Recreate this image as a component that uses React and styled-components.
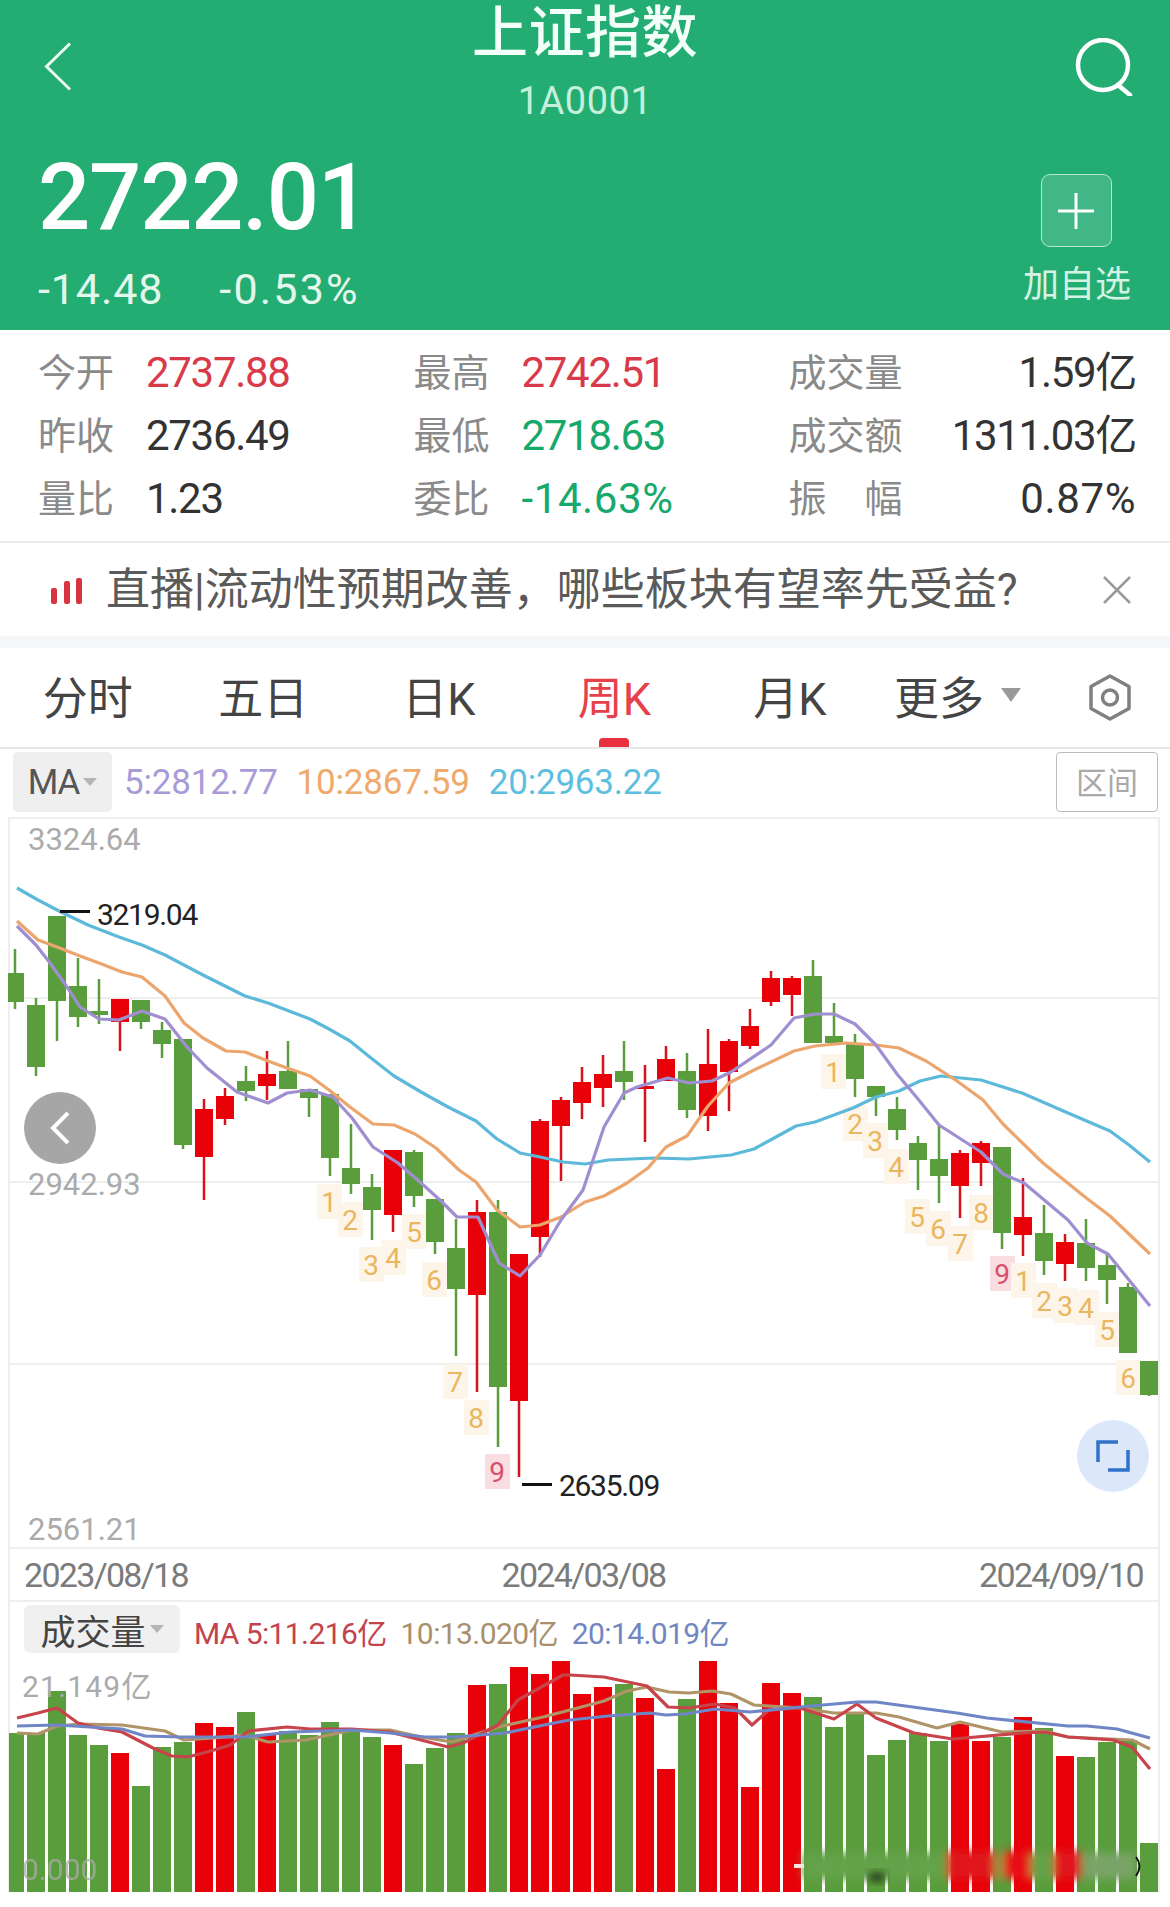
import React from "react";
import styled, { createGlobalStyle } from "styled-components";

const GREEN = "#599d3c";
const RED = "#e80109";
const COLUMN = (i) => 15 + i * 21;

// [high, bodyTop, bodyBottom, low, colour] in page pixels
const candles = [
  [949, 973, 1002, 1009, "g"], [998, 1005, 1067, 1076, "g"], [916, 916, 1001, 1041, "g"],
  [958, 986, 1017, 1027, "g"], [979, 1011, 1015, 1024, "g"], [999, 999, 1022, 1051, "r"],
  [1000, 1000, 1022, 1029, "g"], [1022, 1030, 1044, 1058, "g"], [1039, 1039, 1145, 1149, "g"],
  [1099, 1109, 1157, 1200, "r"], [1088, 1096, 1119, 1125, "r"], [1066, 1081, 1091, 1101, "g"],
  [1051, 1074, 1086, 1100, "r"], [1041, 1071, 1089, 1089, "g"], [1089, 1089, 1098, 1117, "g"],
  [1094, 1094, 1158, 1176, "g"], [1124, 1168, 1184, 1194, "g"], [1174, 1187, 1210, 1240, "g"],
  [1150, 1150, 1215, 1232, "r"], [1150, 1152, 1196, 1207, "g"], [1199, 1199, 1242, 1254, "g"],
  [1219, 1248, 1289, 1356, "g"], [1200, 1212, 1295, 1392, "r"], [1200, 1212, 1387, 1447, "g"],
  [1254, 1254, 1401, 1477, "r"], [1119, 1121, 1237, 1257, "r"], [1097, 1100, 1126, 1181, "r"],
  [1067, 1082, 1103, 1119, "r"], [1055, 1074, 1088, 1107, "r"], [1041, 1071, 1082, 1100, "g"],
  [1065, 1086, 1089, 1142, "r"], [1046, 1059, 1081, 1081, "r"], [1053, 1071, 1110, 1118, "g"],
  [1029, 1064, 1116, 1131, "r"], [1039, 1041, 1072, 1111, "r"], [1009, 1026, 1046, 1049, "r"],
  [971, 978, 1002, 1006, "r"], [976, 978, 995, 1016, "r"], [960, 976, 1043, 1043, "g"],
  [1003, 1036, 1043, 1043, "g"], [1034, 1044, 1079, 1097, "g"], [1086, 1086, 1097, 1116, "g"],
  [1097, 1109, 1130, 1140, "g"], [1136, 1143, 1160, 1190, "g"], [1125, 1159, 1176, 1203, "g"],
  [1150, 1153, 1186, 1218, "r"], [1141, 1143, 1163, 1186, "r"], [1147, 1147, 1233, 1249, "g"],
  [1178, 1217, 1235, 1256, "r"], [1205, 1233, 1261, 1275, "g"], [1234, 1242, 1264, 1281, "r"],
  [1219, 1243, 1268, 1281, "g"], [1254, 1265, 1280, 1304, "g"], [1283, 1287, 1353, 1353, "g"],
  [1361, 1361, 1395, 1396, "g"],
];

const ma5 = "17,926 36,945 50,963 67,987 80,1007 99,1019 119,1020 142,1011 165,1019 187,1047 207,1068 237,1092 268,1103 287,1093 310,1090 333,1097 352,1118 373,1147 398,1163 421,1183 440,1200 457,1217 478,1217 499,1263 520,1276 540,1255 561,1220 583,1190 604,1127 624,1093 637,1087 668,1078 689,1083 712,1081 731,1072 771,1045 794,1018 815,1014 834,1014 855,1024 876,1045 897,1074 918,1099 939,1125 981,1152 1003,1174 1024,1183 1068,1220 1087,1243 1108,1254 1150,1306";
const ma10 = "17,921 38,940 57,947 80,956 99,963 122,972 142,977 165,996 184,1023 203,1038 226,1051 245,1052 268,1061 287,1068 310,1076 329,1090 350,1107 373,1124 394,1125 415,1134 436,1148 459,1170 476,1182 497,1210 520,1227 540,1225 561,1217 585,1202 604,1196 627,1183 648,1168 666,1147 687,1136 708,1106 729,1083 754,1070 794,1051 815,1046 846,1043 876,1045 899,1048 926,1061 957,1081 983,1100 1003,1124 1043,1163 1085,1197 1110,1216 1150,1254";
const ma20 = "17,888 38,900 61,912 88,925 119,937 142,945 165,955 203,975 245,996 268,1003 310,1019 329,1029 350,1041 371,1058 394,1076 421,1092 448,1107 476,1121 497,1139 520,1153 540,1157 563,1162 585,1164 608,1160 654,1158 689,1159 731,1155 754,1149 796,1126 815,1122 853,1108 876,1097 899,1091 920,1081 941,1076 981,1080 1022,1093 1068,1113 1110,1131 1129,1145 1150,1162";

// TD sequence numbers: [x, y, digit]
const tdMarks = [
  [329, 1202, 1], [350, 1220, 2], [371, 1265, 3], [393, 1258, 4], [414, 1232, 5], [434, 1280, 6],
  [455, 1382, 7], [476, 1418, 8], [497, 1472, 9], [833, 1072, 1], [855, 1124, 2], [875, 1141, 3],
  [896, 1167, 4], [917, 1217, 5], [938, 1229, 6], [960, 1244, 7], [981, 1213, 8], [1002, 1274, 9],
  [1023, 1281, 1], [1044, 1301, 2], [1065, 1306, 3], [1086, 1308, 4], [1107, 1330, 5], [1128, 1378, 6],
];

const volumes = [
  [1733, "g"], [1733, "g"], [1691, "g"], [1735, "g"], [1745, "g"], [1753, "r"], [1786, "g"], [1747, "g"],
  [1742, "g"], [1723, "r"], [1727, "r"], [1712, "g"], [1735, "r"], [1731, "g"], [1735, "g"], [1722, "g"],
  [1730, "g"], [1737, "g"], [1745, "r"], [1764, "g"], [1748, "g"], [1733, "g"], [1685, "r"], [1684, "g"],
  [1667, "r"], [1674, "r"], [1661, "r"], [1694, "r"], [1687, "r"], [1684, "g"], [1698, "r"], [1769, "r"],
  [1699, "g"], [1661, "r"], [1703, "r"], [1787, "r"], [1683, "r"], [1693, "r"], [1697, "g"], [1727, "g"],
  [1712, "g"], [1755, "g"], [1740, "g"], [1733, "g"], [1741, "g"], [1724, "r"], [1741, "r"], [1737, "g"],
  [1717, "r"], [1728, "g"], [1756, "r"], [1757, "g"], [1742, "g"], [1740, "g"], [1843, "g"],
];

const volMa5 = "17,1718 38,1713 57,1708 78,1723 98,1728 122,1732 153,1748 172,1756 188,1757 214,1750 230,1745 249,1731 287,1727 310,1729 352,1729 390,1732 421,1740 448,1747 463,1743 498,1725 518,1700 563,1675 570,1675 604,1677 647,1686 668,1707 689,1708 715,1704 735,1708 752,1725 769,1710 800,1708 834,1719 857,1704 876,1718 914,1733 953,1739 1022,1733 1045,1732 1068,1737 1113,1740 1132,1747 1150,1769";
const volMa10 = "17,1733 38,1734 57,1726 80,1724 122,1725 165,1731 184,1740 214,1738 245,1735 268,1742 306,1740 352,1730 390,1730 421,1737 452,1742 498,1727 543,1717 570,1710 604,1701 627,1691 647,1687 669,1692 689,1693 712,1691 731,1694 754,1705 800,1708 834,1713 876,1713 899,1717 937,1728 960,1722 1002,1732 1045,1731 1068,1737 1132,1740 1150,1749";
const volMa20 = "17,1726 57,1725 122,1729 145,1736 180,1737 245,1737 291,1732 352,1730 390,1733 425,1737 455,1737 505,1733 559,1722 570,1720 608,1716 650,1713 666,1715 685,1714 715,1709 750,1712 800,1707 857,1702 876,1702 957,1713 987,1718 1068,1726 1087,1726 1117,1729 1150,1738";

const stats = [
  ["今开", "2737.88", "#d93a4a", "最高", "2742.51", "#d93a4a", "成交量", "1.59亿"],
  ["昨收", "2736.49", "#333", "最低", "2718.63", "#17a86b", "成交额", "1311.03亿"],
  ["量比", "1.23", "#333", "委比", "-14.63%", "#17a86b", "振　幅", "0.87%"],
];

const tabs = ["分时", "五日", "日K", "周K", "月K"];

export default function App() {
  return (
    <Page>
      <GlobalStyle />
      <Header>
        <TopBar>
          <BackIcon width="28" height="49" viewBox="0 0 28 49">
            <path d="M26 1.5 L2.5 24.5 L26 47.5" />
          </BackIcon>
          <TitleBlock>
            <Title>上证指数</Title>
            <Code>1A0001</Code>
          </TitleBlock>
          <SearchIcon width="58" height="58" viewBox="0 0 58 58">
            <circle cx="28" cy="27" r="25" />
            <path d="M43 47 L55 57" />
          </SearchIcon>
        </TopBar>
        <QuoteRow>
          <div>
            <Price>2722.01</Price>
            <ChangeRow>
              <span>-14.48</span>
              <ChangePercent>-0.53%</ChangePercent>
            </ChangeRow>
          </div>
          <AddBlock>
            <AddButton>
              <svg width="36" height="36" viewBox="0 0 36 36">
                <path d="M18 0 V36 M0 18 H36" stroke="#fff" strokeWidth="3" />
              </svg>
            </AddButton>
            <AddLabel>加自选</AddLabel>
          </AddBlock>
        </QuoteRow>
      </Header>

      <StatGrid>
        {stats.map((row) => (
          <React.Fragment key={row[0]}>
            <StatCell>
              <StatLabel>{row[0]}</StatLabel>
              <StatValue $color={row[2]}>{row[1]}</StatValue>
            </StatCell>
            <StatCell>
              <StatLabel>{row[3]}</StatLabel>
              <StatValue $color={row[5]} $percent={row[4].endsWith("%")}>
                {row[4]}
              </StatValue>
            </StatCell>
            <StatCell $spread>
              <StatLabel>{row[6]}</StatLabel>
              <StatValue $percent={row[7].endsWith("%")}>{row[7]}</StatValue>
            </StatCell>
          </React.Fragment>
        ))}
      </StatGrid>

      <Notice>
        <NoticeBars>
          <NoticeBar $h={16} />
          <NoticeBar $h={23} />
          <NoticeBar $h={26} />
        </NoticeBars>
        <NoticeText>直播|流动性预期改善，哪些板块有望率先受益?</NoticeText>
        <svg width="28" height="28" viewBox="0 0 28 28">
          <path d="M1 1 L27 27 M27 1 L1 27" stroke="#9a9a9a" strokeWidth="2.5" />
        </svg>
      </Notice>
      <Gap />

      <TabBar>
        {tabs.map((t) => (
          <Tab key={t} $active={t === "周K"}>
            {t}
          </Tab>
        ))}
        <Tab>
          更多
          <TabCaret />
        </Tab>
        <GearIcon width="44" height="47" viewBox="0 0 44 47">
          <path d="M22 2 L41 12.5 V34.5 L22 45 L3 34.5 V12.5 Z" />
          <circle cx="22" cy="23.5" r="7.5" />
        </GearIcon>
      </TabBar>

      <LegendRow>
        <MaButton>
          MA
          <SmallCaret />
        </MaButton>
        <Legend $color="#a99bd8">5:2812.77</Legend>
        <Legend $color="#efa96a">10:2867.59</Legend>
        <Legend $color="#5dbfe0">20:2963.22</Legend>
        <RangeButton>区间</RangeButton>
      </LegendRow>

      <ChartArea>
        <ChartSvg width="1152" height="732" viewBox="8 817 1152 732">
          <GridLine x1="8" x2="1160" y1="818" y2="818" />
          <GridLine x1="8" x2="1160" y1="998" y2="998" />
          <GridLine x1="8" x2="1160" y1="1182" y2="1182" />
          <GridLine x1="8" x2="1160" y1="1364" y2="1364" />
          <GridLine x1="8" x2="1160" y1="1548" y2="1548" />

          {tdMarks.map(([x, y, n]) => (
            <g key={`${x}-${n}`}>
              <rect
                x={x - 12}
                y={y - 18}
                width="25"
                height="35"
                fill={n === 9 ? "#f9dde0" : "#fef5ea"}
              />
              <TdDigit x={x} y={y + 10} $hot={n === 9}>
                {n}
              </TdDigit>
            </g>
          ))}

          {candles.map(([hi, top, bot, lo, c], i) => (
            <g key={i}>
              <rect
                x={COLUMN(i) - 1.25}
                y={hi}
                width="2.5"
                height={lo - hi}
                fill={c === "g" ? GREEN : "#d5131c"}
              />
              <rect
                x={COLUMN(i) - 9}
                y={top}
                width="18"
                height={bot - top}
                fill={c === "g" ? GREEN : RED}
              />
            </g>
          ))}

          <MaLine points={ma20} stroke="#5cb9da" />
          <MaLine points={ma10} stroke="#eba56d" />
          <MaLine points={ma5} stroke="#a08fd0" />

          <AxisLabel x="28" y="850">3324.64</AxisLabel>
          <AxisLabel x="28" y="1195">2942.93</AxisLabel>
          <AxisLabel x="28" y="1540">2561.21</AxisLabel>

          <rect x="60" y="910" width="30" height="3" fill="#111" />
          <PeakLabel x="97" y="925">3219.04</PeakLabel>
          <rect x="522" y="1483" width="30" height="3" fill="#111" />
          <PeakLabel x="559" y="1496">2635.09</PeakLabel>
        </ChartSvg>

        <BackFab>
          <svg width="20" height="34" viewBox="0 0 20 34">
            <path d="M18 2 L3 17 L18 32" fill="none" stroke="#fff" strokeWidth="4" />
          </svg>
        </BackFab>
        <ExpandFab>
          <svg width="34" height="32" viewBox="0 0 34 32">
            <path
              d="M2 22 V2 H22 M32 10 V30 H12"
              fill="none"
              stroke="#2f72c9"
              strokeWidth="3.5"
            />
          </svg>
        </ExpandFab>

        <DateRow>
          <span>2023/08/18</span>
          <span>2024/03/08</span>
          <span>2024/09/10</span>
        </DateRow>

        <VolumeHeader>
          <VolumeButton>
            成交量
            <SmallCaret />
          </VolumeButton>
          <VolumeLegend $color="#c2434c">MA 5:11.216亿</VolumeLegend>
          <VolumeLegend $color="#a98f6b">10:13.020亿</VolumeLegend>
          <VolumeLegend $color="#6f86c1">20:14.019亿</VolumeLegend>
        </VolumeHeader>

        <ChartSvg width="1152" height="232" viewBox="8 1660 1152 232">
          <defs>
            <filter id="smudge" x="-20%" y="-60%" width="140%" height="220%">
              <feGaussianBlur stdDeviation="4" />
            </filter>
          </defs>
          {volumes.map(([top, c], i) => (
            <rect
              key={i}
              x={Math.max(COLUMN(i) - 9, 9)}
              y={top}
              width={i === 0 ? 15 : 18}
              height={1892 - top}
              fill={c === "g" ? GREEN : RED}
            />
          ))}
          <MaLine points={volMa10} stroke="#b09467" />
          <MaLine points={volMa5} stroke="#c8434a" />
          <MaLine points={volMa20} stroke="#6f86c6" />

          <g filter="url(#smudge)">
            <rect x="803" y="1853" width="142" height="26" fill="#63a34a" />
            <rect x="947" y="1851" width="48" height="28" fill="#e0141c" />
            <rect x="995" y="1853" width="8" height="26" fill="#63a34a" />
            <rect x="1003" y="1851" width="28" height="28" fill="#e80c12" />
            <rect x="1031" y="1853" width="22" height="26" fill="#63a34a" />
            <rect x="1054" y="1851" width="27" height="28" fill="#e0141c" />
            <rect x="1083" y="1853" width="52" height="26" fill="#79a468" />
          </g>
          <ellipse cx="877" cy="1877" rx="9" ry="4" fill="#14200f" filter="url(#smudge)" />
          <rect x="794" y="1864" width="10" height="4" fill="#ffe3e3" />
          <path d="M1136 1857 Q1143 1866 1136 1876" fill="none" stroke="#111" strokeWidth="2" />

          <AxisLabel x="22" y="1697" $size={30} $spacing={1.2}>21.149亿</AxisLabel>
          <AxisLabel x="22" y="1880" $size={30} $fade>0.000</AxisLabel>
        </ChartSvg>
      </ChartArea>
    </Page>
  );
}

const GlobalStyle = createGlobalStyle`
  html, body {
    margin: 0;
    background: #fff;
  }
  body {
    font-family: Roboto, "Noto Sans CJK SC", sans-serif;
  }
  * {
    box-sizing: border-box;
  }
`;

const Page = styled.div`
  width: 1170px;
  height: 1907px;
  overflow: hidden;
  background: #fff;
`;

const Header = styled.header`
  height: 330px;
  background: #24ad72;
  color: #fff;
`;

const TopBar = styled.div`
  height: 151px;
  display: grid;
  grid-template-columns: 1fr auto 1fr;
  align-items: start;
`;

const BackIcon = styled.svg`
  margin: 42px 0 0 44px;
  fill: none;
  stroke: #eafaf2;
  stroke-width: 3;
`;

const SearchIcon = styled.svg`
  justify-self: end;
  margin: 38px 37px 0 0;
  fill: none;
  stroke: #fff;
  stroke-width: 4.5;
  stroke-linecap: round;
`;

const TitleBlock = styled.div`
  text-align: center;
`;

const Title = styled.h1`
  margin: 0;
  font-family: "Noto Sans CJK SC", sans-serif;
  font-size: 56px;
  line-height: 56px;
  letter-spacing: 0.5px;
  font-weight: 500;
  color: #f3fff9;
`;

const Code = styled.div`
  margin-top: 24px;
  font-size: 38px;
  line-height: 42px;
  letter-spacing: 0.5px;
  color: #c6f0db;
`;

const QuoteRow = styled.div`
  padding: 0 39px 0 38px;
  display: flex;
  justify-content: space-between;
  align-items: flex-start;
`;

const Price = styled.div`
  font-size: 92px;
  line-height: 94px;
  font-weight: 500;
  letter-spacing: -1.2px;
`;

const ChangeRow = styled.div`
  margin-top: 19px;
  display: flex;
  gap: 56px;
  font-size: 43px;
  line-height: 50px;
  letter-spacing: 0.9px;
  color: #e3f7ec;
`;

const ChangePercent = styled.span`
  letter-spacing: 2.2px;
`;

const AddBlock = styled.div`
  margin-top: 23px;
  display: flex;
  flex-direction: column;
  align-items: center;
`;

const AddButton = styled.div`
  width: 71px;
  height: 73px;
  margin-right: 1px;
  border: 1.5px solid #b5e8cf;
  border-radius: 9px;
  background: rgba(255, 255, 255, 0.13);
  display: flex;
  align-items: center;
  justify-content: center;
`;

const AddLabel = styled.div`
  margin-top: 15px;
  font-size: 36px;
  line-height: 46px;
  color: #d5f3e4;
`;

const StatGrid = styled.section`
  height: 213px;
  padding: 11px 34px 0 38px;
  border-bottom: 2px solid #ececec;
  display: grid;
  grid-template-columns: 375.5px 375px 1fr;
  grid-auto-rows: 63px;
`;

const StatCell = styled.div`
  display: flex;
  align-items: center;
  justify-content: ${(p) => (p.$spread ? "space-between" : "flex-start")};
`;

const StatLabel = styled.span`
  width: 108px;
  flex: none;
  margin-top: -6px;
  font-size: 38px;
  color: #8a8a8a;
  white-space: pre;
`;

const StatValue = styled.span`
  font-size: 42px;
  line-height: 48px;
  letter-spacing: ${(p) => (p.$percent ? "0.6px" : "-1.3px")};
  color: ${(p) => p.$color || "#333"};
`;

const Notice = styled.div`
  height: 93px;
  padding: 0 39px 0 51px;
  display: flex;
  align-items: center;
`;

const NoticeBars = styled.div`
  width: 31px;
  height: 26px;
  margin-top: 3px;
  display: flex;
  align-items: flex-end;
  justify-content: space-between;
`;

const NoticeBar = styled.div`
  width: 6px;
  height: ${(p) => p.$h}px;
  border-radius: 2px;
  background: #d8343f;
`;

const NoticeText = styled.div`
  flex: 1;
  margin-left: 24px;
  font-size: 44px;
  line-height: 50px;
  color: #5a5a5a;
  white-space: nowrap;
`;

const Gap = styled.div`
  height: 12px;
  background: #f5f6f8;
`;

const TabBar = styled.nav`
  height: 101px;
  border-bottom: 2px solid #e6e6e6;
  display: grid;
  grid-template-columns: repeat(5, 175.5px) 160px 1fr;
  align-items: center;
`;

const Tab = styled.div`
  position: relative;
  height: 99px;
  padding-bottom: 5px;
  display: flex;
  align-items: center;
  justify-content: center;
  font-size: 45px;
  color: ${(p) => (p.$active ? "#e8404b" : "#444")};

  &::after {
    content: "";
    display: ${(p) => (p.$active ? "block" : "none")};
    position: absolute;
    left: 50%;
    bottom: 0;
    width: 30px;
    height: 9px;
    margin-left: -15px;
    border-radius: 4px 4px 0 0;
    background: #e8303f;
  }
`;

const TabCaret = styled.i`
  margin-left: 17px;
  border-left: 10px solid transparent;
  border-right: 10px solid transparent;
  border-top: 14px solid #999;
`;

const GearIcon = styled.svg`
  justify-self: end;
  margin-right: 38px;
  fill: none;
  stroke: #808080;
  stroke-width: 3.5;
  stroke-linejoin: round;
`;

const LegendRow = styled.div`
  height: 68px;
  padding: 3px 13px 5px;
  display: flex;
  align-items: center;
  gap: 19px;
`;

const MaButton = styled.div`
  width: 99px;
  height: 60px;
  margin-right: -7px;
  border-radius: 5px;
  background: #efefef;
  display: flex;
  align-items: center;
  justify-content: center;
  font-size: 35px;
  letter-spacing: -1px;
  color: #555;
`;

const SmallCaret = styled.i`
  margin-left: 4px;
  border-left: 7px solid transparent;
  border-right: 7px solid transparent;
  border-top: 8px solid #b5b5b5;
`;

const Legend = styled.span`
  font-size: 35px;
  letter-spacing: -0.2px;
  color: ${(p) => p.$color};
`;

const RangeButton = styled.div`
  width: 102px;
  height: 60px;
  margin-left: auto;
  margin-right: -1px;
  padding-bottom: 3px;
  border: 1.5px solid #bbb;
  border-radius: 4px;
  display: flex;
  align-items: center;
  justify-content: center;
  font-size: 31px;
  color: #a9a9a9;
`;

const ChartArea = styled.section`
  position: relative;
  width: 1152px;
  margin-left: 8px;
  border-left: 2px solid #eee;
  border-right: 2px solid #eee;
`;

const ChartSvg = styled.svg`
  display: block;
  margin-left: -2px;
  overflow: hidden;
`;

const GridLine = styled.line`
  stroke: #eeeeee;
  stroke-width: 2;
`;

const MaLine = styled.polyline`
  fill: none;
  stroke-width: 3.2;
  stroke-linejoin: round;
`;

const TdDigit = styled.text`
  font-family: Roboto, sans-serif;
  font-size: 28px;
  text-anchor: middle;
  fill: ${(p) => (p.$hot ? "#d64f6c" : "#e9b75e")};
`;

const AxisLabel = styled.text`
  font-family: Roboto, "Noto Sans CJK SC", sans-serif;
  font-size: ${(p) => p.$size || 31}px;
  letter-spacing: ${(p) => p.$spacing || 0}px;
  fill: #ababab;
  opacity: ${(p) => (p.$fade ? 0.75 : 1)};
`;

const PeakLabel = styled.text`
  font-family: Roboto, sans-serif;
  font-size: 30px;
  letter-spacing: -1.3px;
  fill: #222;
`;

const Fab = styled.div`
  position: absolute;
  width: 72px;
  height: 72px;
  border-radius: 50%;
  display: flex;
  align-items: center;
  justify-content: center;
`;

const BackFab = styled(Fab)`
  left: 14px;
  top: 275px;
  background: #a6a6a6;
`;

const ExpandFab = styled(Fab)`
  left: 1067px;
  top: 603px;
  background: #dce8f9;
`;

const DateRow = styled.div`
  height: 53px;
  padding: 0 15px 0 14px;
  border-bottom: 2px solid #eee;
  display: flex;
  align-items: center;
  justify-content: space-between;
  font-size: 34px;
  letter-spacing: -1.7px;
  color: #7b7b7b;
`;

const VolumeHeader = styled.div`
  height: 58px;
  padding: 3px 0 7px 14px;
  display: flex;
  align-items: center;
  gap: 14px;
`;

const VolumeButton = styled.div`
  width: 156px;
  height: 48px;
  border-radius: 6px;
  background: #f0f0f0;
  display: flex;
  align-items: center;
  justify-content: center;
  font-size: 35px;
  color: #444;
`;

const VolumeLegend = styled.span`
  margin-top: 3px;
  font-size: 30px;
  letter-spacing: -0.6px;
  color: ${(p) => p.$color};
`;
